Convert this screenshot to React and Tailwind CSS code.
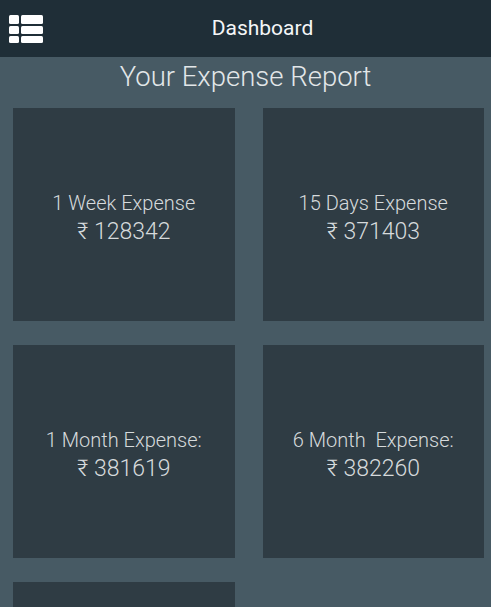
import React from 'react';

const reports = [
  { label: '1 Week Expense', amount: '128342' },
  { label: '15 Days Expense', amount: '371403' },
  { label: '1 Month Expense:', amount: '381619' },
  { label: '6 Month  Expense:', amount: '382260' },
  { label: '', amount: '' },
];

const MenuIcon = () => (
  <svg width="34" height="28" viewBox="0 0 34 28" fill="#ffffff">
    <rect x="0" y="0" width="10" height="9" rx="1.5" />
    <rect x="12" y="0" width="22" height="9" rx="1.5" />
    <rect x="0" y="11" width="10" height="8" rx="1.5" />
    <rect x="12" y="11" width="22" height="8" rx="1.5" />
    <rect x="0" y="21" width="10" height="7" rx="1.5" />
    <rect x="12" y="21" width="22" height="7" rx="1.5" />
  </svg>
);

const App = () => {
  return (
    <div
      className="w-full h-[607px] overflow-hidden bg-[#475a64]"
      style={{ fontFamily: 'Roboto, "Noto Sans", sans-serif' }}
    >
      {/* Header */}
      <div className="h-[57px] bg-[#1f2e37] flex items-center px-[9px]">
        <MenuIcon />
        <div className="flex-1 text-center text-[#f4f6f7] text-[21px]">
          Dashboard
        </div>
      </div>

      {/* Title */}
      <div className="h-[51px] text-center text-[27.5px] leading-[40px] font-light text-[#e3e7e9]">
        Your Expense Report
      </div>

      {/* Cards */}
      <div className="grid grid-cols-2 gap-x-[28px] gap-y-[24px] pl-[13px] pr-[7px]">
        {reports.map((r, i) => (
          <div
            key={i}
            className="h-[213px] bg-[#2f3c44] flex flex-col items-center justify-center pt-[8px] text-[#d6dadc] font-light"
          >
            {r.label && (
              <>
                <div className="text-[20px] leading-[26px] whitespace-pre">{r.label}</div>
                <div className="text-[23px] leading-[32px]">₹ {r.amount}</div>
              </>
            )}
          </div>
        ))}
      </div>
    </div>
  );
};

export default App;
